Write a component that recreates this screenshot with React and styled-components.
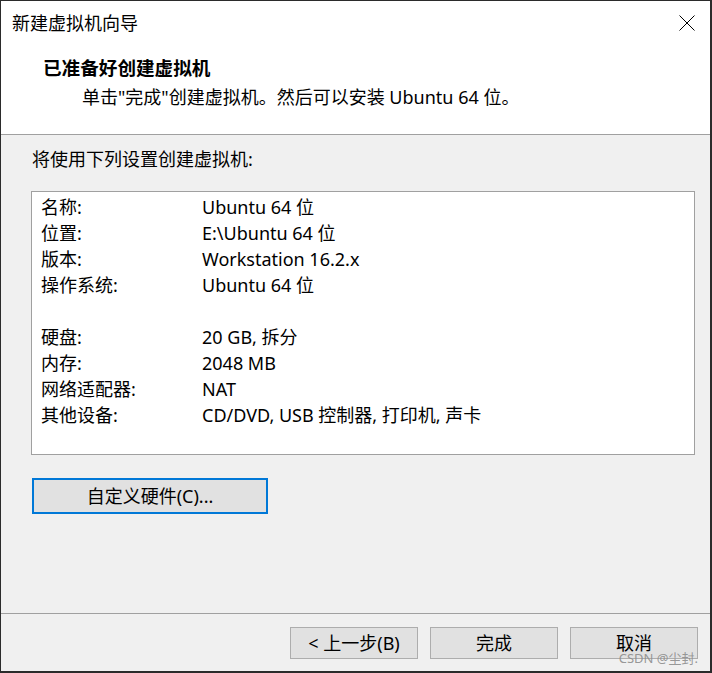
import React from 'react';
import styled, { createGlobalStyle } from 'styled-components';

const GlobalStyle = createGlobalStyle`
    html, body {
        margin: 0;
        padding: 0;
        background: #ffffff;
    }
    * {
        box-sizing: border-box;
    }
`

const settings = [
    { label: '名称:', value: 'Ubuntu 64 位' },
    { label: '位置:', value: 'E:\\Ubuntu 64 位' },
    { label: '版本:', value: 'Workstation 16.2.x' },
    { label: '操作系统:', value: 'Ubuntu 64 位' },
    null,
    { label: '硬盘:', value: '20 GB, 拆分' },
    { label: '内存:', value: '2048 MB' },
    { label: '网络适配器:', value: 'NAT' },
    { label: '其他设备:', value: 'CD/DVD, USB 控制器, 打印机, 声卡' },
]

const CloseIcon = () => (
    <svg width="16" height="16" viewBox="0 0 16 16">
        <path d="M0.5 0.5 L15.5 15.5 M15.5 0.5 L0.5 15.5" stroke="#000" strokeWidth="1" fill="none" />
    </svg>
)

const App = () => {
    return (
        <>
            <GlobalStyle />
            <Window>
                <TitleBar>
                    <WindowTitle>新建虚拟机向导</WindowTitle>
                    <CloseButton><CloseIcon /></CloseButton>
                </TitleBar>

                <Header>
                    <HeaderTitle>已准备好创建虚拟机</HeaderTitle>
                    <HeaderText>单击"完成"创建虚拟机。然后可以安装 Ubuntu 64 位。</HeaderText>
                </Header>

                <Body>
                    <Intro>将使用下列设置创建虚拟机:</Intro>
                    <SummaryBox>
                        {settings.map((item, i) =>
                            item ? (
                                <React.Fragment key={i}>
                                    <Label>{item.label}</Label>
                                    <Value>{item.value}</Value>
                                </React.Fragment>
                            ) : (
                                <Spacer key={i} />
                            )
                        )}
                    </SummaryBox>
                    <CustomizeButton>自定义硬件(C)...</CustomizeButton>
                </Body>

                <Footer>
                    <DialogButton>&lt; 上一步(B)</DialogButton>
                    <DialogButton>完成</DialogButton>
                    <DialogButton>取消</DialogButton>
                    <Watermark>CSDN @尘封.</Watermark>
                </Footer>
            </Window>
        </>
    )
}

export default App

const Window = styled.div`
    position: relative;
    width: 712px;
    height: 673px;
    display: flex;
    flex-direction: column;
    background: #ffffff;
    border-top: 1px solid #2b2b2b;
    border-left: 1px solid #2b2b2b;
    border-right: 2px solid #2b2b2b;
    border-bottom: 2px solid #2b2b2b;
    font-family: "Noto Sans", "Noto Sans CJK SC", sans-serif;
    font-size: 18px;
    color: #000;
`
const TitleBar = styled.div`
    height: 44px;
    display: flex;
    align-items: center;
    justify-content: space-between;
    padding: 0 15px 0 11px;
`
const WindowTitle = styled.span`
    font-size: 18px;
    line-height: 26px;
`
const CloseButton = styled.div`
    width: 16px;
    height: 16px;
    display: flex;
`
const Header = styled.div`
    height: 90px;
    display: flex;
    flex-direction: column;
    gap: 3px;
    padding-top: 10px;
    border-bottom: 1px solid #a0a0a0;
`
const HeaderTitle = styled.div`
    padding-left: 42px;
    font-size: 18.6px;
    font-weight: 700;
    line-height: 26px;
`
const HeaderText = styled.div`
    padding-left: 81px;
    line-height: 26px;
`
const Body = styled.div`
    flex: 1;
    display: flex;
    flex-direction: column;
    align-items: flex-start;
    background: #f0f0f0;
    padding: 11px 0 0 30px;
`
const Intro = styled.div`
    line-height: 26px;
    padding-left: 1px;
`
const SummaryBox = styled.div`
    margin-top: 19px;
    width: 664px;
    height: 264px;
    background: #ffffff;
    border: 1px solid #a0a0a0;
    padding: 2px 0 0 9px;
    display: grid;
    grid-template-columns: 161px 1fr;
    grid-auto-rows: 26px;
    align-content: start;
    line-height: 26px;
`
const Label = styled.div`
    white-space: nowrap;
`
const Value = styled.div`
    white-space: nowrap;
`
const Spacer = styled.div`
    grid-column: 1 / -1;
`
const CustomizeButton = styled.div`
    margin: 23px 0 0 1px;
    width: 236px;
    height: 36px;
    display: flex;
    align-items: center;
    justify-content: center;
    background: #e1e1e1;
    border: 2px solid #0078d7;
    line-height: 26px;
`
const Footer = styled.div`
    position: relative;
    display: flex;
    justify-content: flex-end;
    gap: 12px;
    padding: 13px 12px 12px 0;
    background: #f0f0f0;
    border-top: 1px solid #a0a0a0;
`
const DialogButton = styled.div`
    width: 128px;
    height: 32px;
    display: flex;
    align-items: center;
    justify-content: center;
    background: #e1e1e1;
    border: 1px solid #adadad;
    line-height: 26px;
`
const Watermark = styled.span`
    position: absolute;
    right: 12px;
    bottom: 4px;
    font-size: 13px;
    line-height: 18px;
    color: rgba(140, 140, 140, 0.9);
    pointer-events: none;
`
